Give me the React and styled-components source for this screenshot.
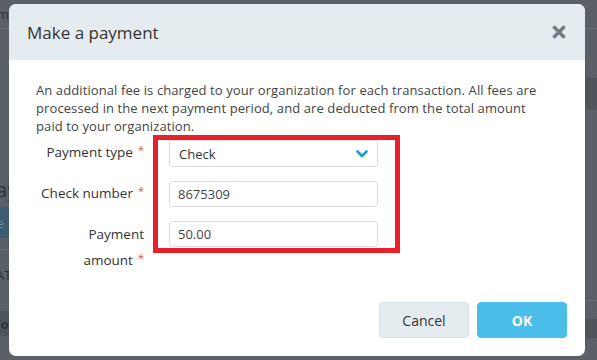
import React from 'react'
import styled, { createGlobalStyle } from 'styled-components'

const GlobalStyle = createGlobalStyle`
  html, body {
    margin: 0;
    padding: 0;
    width: 597px;
    height: 360px;
    overflow: hidden;
    font-family: "Open Sans", "Liberation Sans", sans-serif;
    color: #333;
  }
`

const Screen = styled.div`
  position: relative;
  width: 597px;
  height: 360px;
  background: #5b5f67;
  overflow: hidden;
`

// faded page behind the overlay
const Backdrop = styled.div`
  display: grid;
  grid-template-columns: 300px 1fr;
  height: 100%;
`

const BackCol = styled.div`
  display: flex;
  flex-direction: column;
`

const BackTop = styled.div`
  height: 28px;
  border-bottom: 1px solid #6a6e76;
  display: flex;
  align-items: center;
  font-size: 13px;
  color: #2e3136;
`

const BackSpace = styled.div`
  height: ${p => p.$h}px;
  flex-shrink: 0;
`

const BackBand = styled.div`
  height: ${p => p.$h}px;
  background: #50545b;
  display: flex;
  align-items: center;
  font-size: 13px;
  font-weight: 700;
  color: #2e3136;
`

const BackHeading = styled.div`
  height: 26px;
  font-size: 20px;
  line-height: 26px;
  color: #2e3136;
`

const BackButton = styled.div`
  height: 31px;
  width: 80px;
  background: #3c5c71;
  color: #6d8797;
  font-size: 13px;
  display: flex;
  align-items: center;
`

const BackRow = styled.div`
  height: ${p => p.$h}px;
  border-top: 1px solid #6a6e76;
  display: flex;
  align-items: center;
  font-size: 13px;
  color: #2e3136;
`

const Peek = styled.span`
  margin-left: ${p => p.$shift}px;
  white-space: nowrap;
`

const Modal = styled.div`
  position: absolute;
  left: 9px;
  top: 4px;
  width: 576px;
  height: 352px;
  background: #fff;
  border-radius: 7px;
  overflow: hidden;
  display: flex;
  flex-direction: column;
`

const Header = styled.div`
  height: 56px;
  background: #e5ecf0;
  display: flex;
  align-items: center;
  justify-content: space-between;
  padding: 0 18px 0 18px;
  flex-shrink: 0;
`

const Title = styled.h4`
  margin: 0;
  font-size: 17px;
  font-weight: 400;
  color: #333;
`

const Close = styled.button`
  border: none;
  background: none;
  padding: 0;
  width: 16px;
  height: 16px;
  display: flex;
  align-items: center;
  justify-content: center;
  cursor: pointer;
`

const Body = styled.div`
  position: relative;
  flex: 1;
  padding: 21px 27px 0 27px;
`

const Intro = styled.p`
  margin: 0 0 5px;
  font-size: 13px;
  line-height: 18px;
  letter-spacing: 0.1px;
  color: #444;
  max-width: 518px;
`

const Form = styled.div`
  display: grid;
  grid-template-columns: 108px 209px;
  column-gap: 25px;
  row-gap: 14px;
  align-items: start;
`

const Label = styled.label`
  text-align: right;
  font-size: 13.5px;
  line-height: 24px;
  margin-top: ${p => p.$top || 0}px;
  color: #333;
`

const Req = styled.span`
  color: #d9534f;
  font-size: 11px;
  vertical-align: 3px;
  margin-left: 5px;
`

const Select = styled.div`
  height: 27px;
  box-sizing: border-box;
  border: 1px solid #ddd;
  border-radius: 2px;
  display: flex;
  align-items: center;
  justify-content: space-between;
  padding: 0 9px 0 9px;
  font-size: 13px;
  color: #333;
`

const Input = styled.input`
  height: 26px;
  box-sizing: border-box;
  border: 1px solid #ddd;
  border-radius: 4px;
  padding: 0 8px;
  font-family: inherit;
  font-size: 13px;
  color: #444;
  outline: none;
  width: 100%;
`

const Highlight = styled.div`
  position: absolute;
  left: 144px;
  top: 75px;
  width: 247px;
  height: 118px;
  box-sizing: border-box;
  border: 5px solid #e8202a;
  pointer-events: none;
`

const Footer = styled.div`
  display: flex;
  justify-content: flex-end;
  gap: 8px;
  padding: 0 18px 18px;
`

const Button = styled.button`
  width: 90px;
  height: 36px;
  border-radius: 4px;
  font-family: inherit;
  font-size: 14px;
  cursor: pointer;
  border: 1px solid ${p => (p.$primary ? '#4bbde9' : '#d5dee4')};
  background: ${p => (p.$primary ? '#4bbde9' : '#e5ecf0')};
  color: ${p => (p.$primary ? '#fff' : '#333')};
  font-weight: ${p => (p.$primary ? 700 : 400)};
`

export default function App() {
  return (
    <>
      <GlobalStyle />
      <Screen>
        <Backdrop>
          <BackCol>
            <BackTop>
              <Peek $shift={-20}>Name</Peek>
            </BackTop>
            <BackSpace $h={148} />
            <BackHeading>
              <Peek $shift={-16}>Pay</Peek>
            </BackHeading>
            <BackSpace $h={4} />
            <BackButton>
              <Peek $shift={-24}>Save</Peek>
            </BackButton>
            <BackSpace $h={11} />
            <BackRow $h={50}>
              <Peek $shift={-4}>ATTN</Peek>
            </BackRow>
            <BackSpace $h={11} />
            <BackBand $h={25}>
              <Peek $shift={-7}>Total</Peek>
            </BackBand>
          </BackCol>
          <BackCol>
            <BackTop />
            <BackSpace $h={49} />
            <BackBand $h={32} />
            <BackSpace $h={190} />
            <BackRow $h={18} />
            <BackBand $h={19} />
          </BackCol>
        </Backdrop>

        <Modal>
          <Header>
            <Title>Make a payment</Title>
            <Close aria-label="Close">
              <svg width="14" height="14" viewBox="0 0 14 14">
                <path d="M2.5 2.5 L11.5 11.5 M11.5 2.5 L2.5 11.5" stroke="#6f7c86" strokeWidth="3.6" strokeLinecap="round" />
              </svg>
            </Close>
          </Header>
          <Body>
            <Intro>
              An additional fee is charged to your organization for each transaction. All fees are
              processed in the next payment period, and are deducted from the total amount paid to
              your organization.
            </Intro>
            <Form>
              <Label $top={-2}>
                Payment type<Req>*</Req>
              </Label>
              <Select>
                <span>Check</span>
                <svg width="12" height="8" viewBox="0 0 12 8">
                  <path d="M1.5 1.5 L6 6 L10.5 1.5" stroke="#1a9ad6" strokeWidth="2.6" fill="none" strokeLinecap="round" strokeLinejoin="round" />
                </svg>
              </Select>
              <Label $top={-2}>
                Check number<Req>*</Req>
              </Label>
              <Input defaultValue="8675309" />
              <Label $top={1}>
                Payment amount<Req>*</Req>
              </Label>
              <Input defaultValue="50.00" />
            </Form>
            <Highlight />
          </Body>
          <Footer>
            <Button>Cancel</Button>
            <Button $primary>OK</Button>
          </Footer>
        </Modal>
      </Screen>
    </>
  )
}
